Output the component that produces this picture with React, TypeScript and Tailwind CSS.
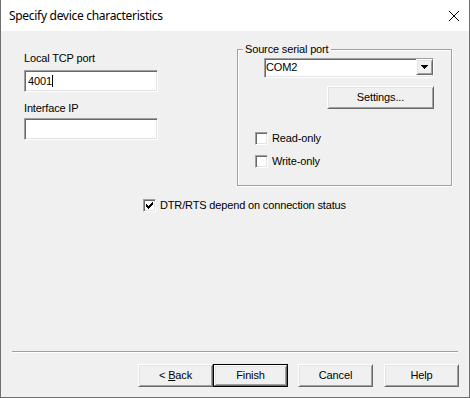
import React from 'react';

// classic 3D edges
const raised =
  'border border-t-white border-l-white border-r-[#696969] border-b-[#696969] shadow-[inset_1px_1px_0_#e3e3e3,inset_-1px_-1px_0_#a0a0a0]';
const sunken =
  'border border-t-[#a0a0a0] border-l-[#a0a0a0] border-r-white border-b-white shadow-[inset_1px_1px_0_#696969,inset_-1px_-1px_0_#e3e3e3]';

function Check() {
  return (
    <svg width="7" height="7" viewBox="0 0 7 7" shapeRendering="crispEdges">
      <path
        d="M0 2H1V3H2V4H3V3H4V2H5V1H6V0H7V3H6V4H5V5H4V6H3V7H2V6H1V5H0Z"
        fill="#000"
      />
    </svg>
  );
}

function CheckBox({ label, checked }: { label: string; checked?: boolean }) {
  return (
    <label className="flex items-center gap-[4px] h-[13px]">
      <span className={`w-[13px] h-[13px] shrink-0 bg-white ${sunken} flex items-center justify-center`}>
        {checked && <Check />}
      </span>
      <span>{label}</span>
    </label>
  );
}

function Button({ children, isDefault, className = '' }: { children: React.ReactNode; isDefault?: boolean; className?: string }) {
  if (isDefault) {
    return (
      <button className={`w-[75px] h-[23px] border border-black bg-[#f0f0f0] ${className}`}>
        <div className={`w-full h-full flex items-center justify-center ${raised}`}>
          <span>{children}</span>
        </div>
      </button>
    );
  }
  return (
    <button className={`w-[75px] h-[23px] bg-[#f0f0f0] flex items-center justify-center ${raised} ${className}`}>
      <span>{children}</span>
    </button>
  );
}

export default function App() {
  return (
    <div className="w-[470px] h-[398px] flex flex-col border-x border-b border-[#6f6f6f] font-['Liberation_Sans',Arial,sans-serif] text-[11px] leading-[13px] tracking-[-0.15px] text-black">
      {/* Title bar */}
      <div className="h-[31px] shrink-0 bg-white flex items-center justify-between pl-[8px] pr-[10px]">
        <span className="font-['Noto_Sans',sans-serif] text-[12px] leading-[16px] tracking-[-0.3px]">
          Specify device characteristics
        </span>
        <svg width="10" height="10" viewBox="0 0 10 10">
          <path d="M0 0L10 10M10 0L0 10" stroke="#000" strokeWidth="1" />
        </svg>
      </div>

      {/* Body */}
      <div className="flex-1 bg-[#f0f0f0] flex flex-col">
        <div className="flex items-start">
          <div className="flex flex-col pl-[23px] pt-[21px]">
            <span>Local TCP port</span>
            <div className={`mt-[5px] w-[134px] h-[22px] bg-white ${sunken} flex items-center pl-[3px]`}>
              <span>4001</span>
              <span className="w-px h-[12px] bg-black" />
            </div>
            <span className="mt-[10px]">Interface IP</span>
            <div className={`mt-[3px] w-[134px] h-[22px] bg-white ${sunken}`} />
          </div>

          <fieldset className="ml-[79px] mt-[12px] w-[215px] p-0 border border-[#a0a0a0] shadow-[inset_1px_1px_0_#fff,1px_1px_0_#fff]">
            <legend className="ml-[5px] px-[2px] h-[13px] leading-[13px] bg-[#f0f0f0]">Source serial port</legend>
            <div className="flex flex-col pt-[2px] pb-[17px]">
              <div className={`ml-[26px] w-[170px] h-[20px] bg-white ${sunken} flex`}>
                <span className="flex-1 pl-[1px] leading-[16px]">COM2</span>
                <span className={`w-[17px] h-[16px] bg-[#f0f0f0] ${raised} flex items-center justify-center`}>
                  <svg width="7" height="4" viewBox="0 0 7 4" shapeRendering="crispEdges">
                    <path d="M0 0H7V1H6V2H5V3H4V4H3V3H2V2H1V1H0Z" fill="#000" />
                  </svg>
                </span>
              </div>
              <button className={`ml-[89px] mt-[8px] w-[107px] h-[23px] bg-[#f0f0f0] ${raised}`}>Settings...</button>
              <div className="ml-[17px] mt-[23px] flex flex-col gap-[10px]">
                <CheckBox label="Read-only" />
                <CheckBox label="Write-only" />
              </div>
            </div>
          </fieldset>
        </div>

        <div className="ml-[142px] mt-[13px]">
          <CheckBox checked label="DTR/RTS depend on connection status" />
        </div>

        {/* Separator + buttons */}
        <div className="mt-auto mx-[11px] h-[2px] border-t border-t-[#a0a0a0] border-b border-b-white" />
        <div className="flex justify-end pr-[10px] mt-[11px] pb-[10px]">
          <Button>
            {'< '}
            <u>B</u>ack
          </Button>
          <Button isDefault>Finish</Button>
          <Button className="ml-[10px]">Cancel</Button>
          <Button className="ml-[11px]">Help</Button>
        </div>
      </div>
    </div>
  );
}
